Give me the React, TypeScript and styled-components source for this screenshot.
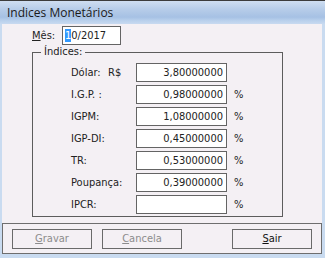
import React from 'react';
import styled, { createGlobalStyle } from 'styled-components';

const GlobalStyle = createGlobalStyle`
  html, body {
    margin: 0;
    padding: 0;
    background: #c6d8ef;
  }
`;

const Window = styled.div`
  width: 325px;
  height: 258px;
  box-sizing: border-box;
  display: flex;
  flex-direction: column;
  background: #c9dbf0;
  border-top: 1px solid #3c3c3c;
  padding: 0 3px 4px 2px;
  font-family: 'DejaVu Sans Condensed', 'DejaVu Sans', sans-serif;
  font-size: 11px;
  color: #222;
`;

const TitleBar = styled.div`
  height: 25px;
  margin: 0 -3px 0 -2px;
  padding-left: 7px;
  display: flex;
  align-items: center;
  background: linear-gradient(to bottom, #cfdef1 0%, #b7cde9 35%, #a6c1e4 70%, #b9d0ec 85%, #c8daf0 100%);
  font-family: 'Open Sans', 'Noto Sans', sans-serif;
  font-size: 12px;
  color: #1a1a1a;
`;

const Body = styled.div`
  flex: 1;
  display: flex;
  flex-direction: column;
  background: #f4f0f4;
  padding-top: 2px;
`;

const MonthRow = styled.div`
  display: flex;
  align-items: center;
  height: 19px;
  padding-left: 30px;
`;

const MonthLabel = styled.span`
  width: 30px;
`;

const TextBox = styled.div<{ $width: number; $align?: string }>`
  width: ${({ $width }) => $width}px;
  height: 19px;
  box-sizing: border-box;
  border: 1px solid #646464;
  background: #fff;
  display: flex;
  align-items: center;
  justify-content: ${({ $align }) => ($align === 'right' ? 'flex-end' : 'flex-start')};
  padding: 0 3px 0 2px;
  font-size: 11px;
  color: #222;
`;

const Selected = styled.span`
  background: #3399ff;
  color: #fff;
`;

const GroupBox = styled.div`
  position: relative;
  margin: 7px 0 0 30px;
  width: 251px;
  height: 165px;
  box-sizing: border-box;
  border: 1px solid #5c5c5c;
  padding: 10px 0 0 38px;
`;

const Legend = styled.span`
  position: absolute;
  top: -8px;
  left: 8px;
  padding: 0 3px;
  background: #f4f0f4;
`;

const Rows = styled.div`
  display: grid;
  grid-template-columns: 37px 28px 91px auto;
  grid-auto-rows: 19px;
  row-gap: 3px;
  align-items: center;
`;

const Percent = styled.span`
  padding-left: 7px;
`;

const ButtonPanel = styled.div`
  margin-top: 6px;
  height: 31px;
  box-sizing: border-box;
  border: 1px solid #6e6e6e;
  display: flex;
  align-items: center;
  gap: 10px;
  padding: 0 9px;
`;

const Button = styled.div<{ $disabled?: boolean }>`
  width: 80px;
  height: 20px;
  box-sizing: border-box;
  border: 1px solid #6a6a6a;
  display: flex;
  align-items: center;
  justify-content: center;
  color: ${({ $disabled }) => ($disabled ? '#8c8c8c' : '#111')};
  &:last-child {
    margin-left: auto;
  }
`;

const rates = [
  { label: 'Dólar:', unit: 'R$', value: '3,80000000', pct: false },
  { label: 'I.G.P. :', unit: '', value: '0,98000000', pct: true },
  { label: 'IGPM:', unit: '', value: '1,08000000', pct: true },
  { label: 'IGP-DI:', unit: '', value: '0,45000000', pct: true },
  { label: 'TR:', unit: '', value: '0,53000000', pct: true },
  { label: 'Poupança:', unit: '', value: '0,39000000', pct: true },
  { label: 'IPCR:', unit: '', value: '', pct: true },
];

export default function App() {
  return (
    <>
      <GlobalStyle />
      <Window>
        <TitleBar>Indices Monetários</TitleBar>
        <Body>
          <MonthRow>
            <MonthLabel>
              <u>M</u>ês:
            </MonthLabel>
            <TextBox $width={59}>
              <Selected>1</Selected>0/2017
            </TextBox>
          </MonthRow>
          <GroupBox>
            <Legend>Índices:</Legend>
            <Rows>
              {rates.map((r) => (
                <React.Fragment key={r.label}>
                  <span style={{ gridColumn: r.unit ? 'auto' : '1 / span 2' }}>{r.label}</span>
                  {r.unit && <span>{r.unit}</span>}
                  <TextBox $width={91} $align="right">{r.value}</TextBox>
                  <Percent>{r.pct ? '%' : ''}</Percent>
                </React.Fragment>
              ))}
            </Rows>
          </GroupBox>
          <ButtonPanel>
            <Button $disabled>
              <u>G</u>ravar
            </Button>
            <Button $disabled>
              <u>C</u>ancela
            </Button>
            <Button>
              <u>S</u>air
            </Button>
          </ButtonPanel>
        </Body>
      </Window>
    </>
  );
}
